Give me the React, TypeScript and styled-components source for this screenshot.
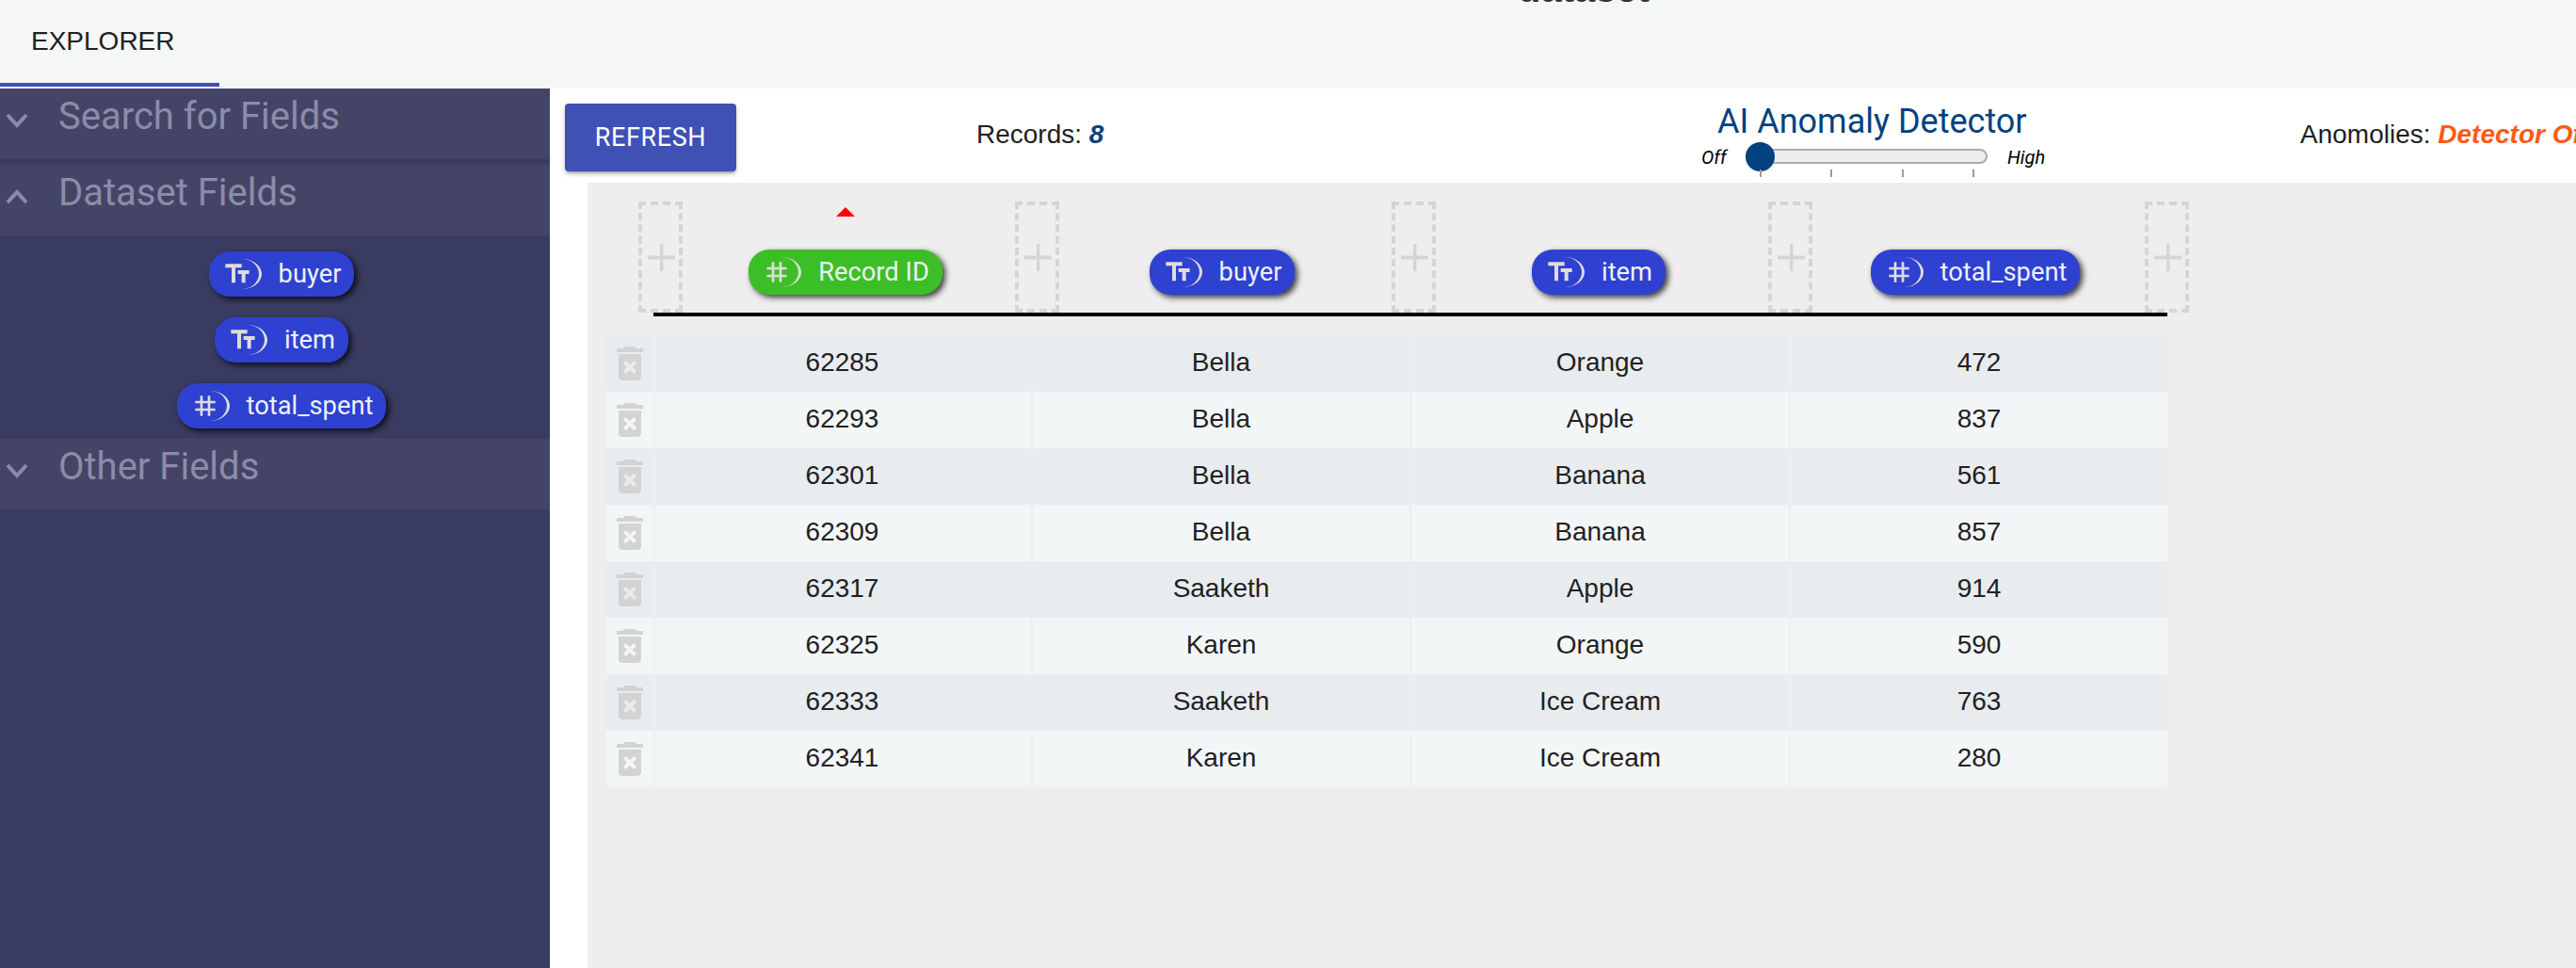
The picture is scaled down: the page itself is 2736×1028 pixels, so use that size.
import React from 'react';
import styled, { createGlobalStyle } from 'styled-components';

const Global = createGlobalStyle`
  html, body { margin: 0; padding: 0; background: #fff; overflow: hidden; }
  * { box-sizing: border-box; }
  #root { width: 2736px; height: 1028px; }
`;

const Page = styled.div`
  width: 2736px;
  height: 1028px;
  display: flex;
  flex-direction: column;
  overflow: hidden;
  position: relative;
  font-family: 'Liberation Sans', Arial, sans-serif;
  color: #212121;
`;

const Header = styled.header`
  height: 94px;
  flex: none;
  background: #f5f6f8;
  display: flex;
  align-items: flex-start;
  position: relative;
`;

const ClippedTitle = styled.div`
  position: absolute;
  left: 1612px;
  top: -34px;
  font: 700 40px 'Liberation Sans', sans-serif;
  color: #333;
`;

const Tab = styled.div`
  width: 233px;
  height: 92px;
  padding: 0 0 0 33px;
  display: flex;
  align-items: center;
  font: 400 28px 'Liberation Sans', sans-serif;
  color: #212121;
  border-bottom: 4px solid #3f51b5;
`;

const Body = styled.div`
  flex: 1;
  display: flex;
  min-height: 0;
`;

const Sidebar = styled.aside`
  width: 584px;
  flex: none;
  background: #393b61;
  display: flex;
  flex-direction: column;
`;

const Section = styled.div`
  display: flex;
  flex-direction: column;
`;

const SectionHead = styled.div<{ $gap?: boolean }>`
  height: 75px;
  background: #444566;
  display: flex;
  align-items: flex-start;
  margin-bottom: ${p => (p.$gap ? '6px' : '0')};
  color: #8b8ca9;
  font: 400 40px Roboto, sans-serif;
  padding-top: 7px;
  line-height: 46px;
`;

const ChevronBox = styled.span`
  width: 62px;
  flex: none;
  display: flex;
  padding: 13px 0 0 5px;
`;

const FieldList = styled.div`
  height: 216px;
  padding: 17px 0 0 14px;
  display: flex;
  flex-direction: column;
  align-items: center;
  gap: 22px;
`;

const Chip = styled.div<{ $green?: boolean }>`
  height: 48px;
  border-radius: 22px;
  padding: 0 14px;
  display: inline-flex;
  align-items: center;
  gap: 18px;
  flex: none;
  background: ${p => (p.$green ? '#3cbf26' : '#2f41d0')};
  color: #eef1f6;
  font: 400 27.3px Roboto, sans-serif;
  box-shadow: 3px 3px 6px rgba(0, 0, 0, 0.75);
`;

const ChipIcon = styled.span`
  width: 42px;
  height: 32px;
  flex: none;
  border-radius: 50%;
  border-right: 3px solid #ddd;
  display: block;
  line-height: 0;
  color: #ddd;
`;

const Main = styled.main`
  flex: 1;
  min-width: 0;
  display: flex;
  flex-direction: column;
`;

const TopBar = styled.div`
  height: 100px;
  flex: none;
  background: #fff;
  display: grid;
  grid-template-columns: 453px 136px 1270px 1fr;
  white-space: nowrap;
`;

const RefreshCell = styled.div`
  display: flex;
  align-items: flex-start;
  padding: 16px 0 0 16px;
`;

const RefreshButton = styled.button`
  width: 182px;
  height: 72px;
  background: #3f51b5;
  border: 0;
  border-radius: 4px;
  color: #fff;
  font: 400 27px Roboto, sans-serif;
  letter-spacing: 0.6px;
  box-shadow: 0 3px 3px -2px rgba(0, 0, 0, 0.3), 0 3px 5px rgba(0, 0, 0, 0.22);
`;

const Stat = styled.div`
  font: 400 28px 'Liberation Sans', sans-serif;
  color: #212121;
  padding-top: 34px;
  line-height: 30px;
`;

const StatValue = styled.b<{ $color: string }>`
  font-style: italic;
  color: ${p => p.$color};
`;

const DetectorCell = styled.div`
  display: flex;
  flex-direction: column;
  align-items: flex-start;
  padding-left: 634px;
`;

const DetectorTitle = styled.div`
  margin-left: 17px;
  font: 400 36px Roboto, sans-serif;
  color: #03417f;
  line-height: 42px;
  padding-top: 14px;
  height: 55px;
`;

const SliderRow = styled.div`
  display: flex;
  align-items: flex-start;
  font: italic 400 20px Roboto, sans-serif;
  color: #000;
  line-height: 24px;
  margin-top: 6px;
`;

const SliderLabel = styled.span`
  width: 47px;
  flex: none;
`;

const SliderBody = styled.div`
  position: relative;
  width: 257px;
  height: 16px;
  margin-top: 3px;
  margin-right: 21px;
  background: #eee;
  border: 2px solid #aaa;
  border-radius: 8px;
`;

const Thumb = styled.span`
  position: absolute;
  left: -2px;
  top: -9.5px;
  width: 31px;
  height: 31px;
  border-radius: 50%;
  background: #03417f;
`;

const Tick = styled.span`
  position: absolute;
  top: 20px;
  width: 1.5px;
  height: 8px;
  background: #a09a95;
`;

const Workspace = styled.div`
  flex: 1;
  background: #eee;
  margin-left: 40px;
  min-height: 0;
  padding: 20px 0 0 54px;
`;

const DropRow = styled.div`
  position: relative;
  display: flex;
  height: 118px;
  width: 1647px;
`;

const DropZone = styled.div`
  width: 47px;
  height: 118px;
  flex: none;
  border: 4px dashed #d5d5d5;
  display: flex;
  align-items: center;
  justify-content: center;
  padding-left: 2px;
`;

const ColumnHead = styled.div`
  width: 353px;
  flex: none;
  position: relative;
  display: flex;
  justify-content: center;
  padding-top: 51px;
  padding-right: 7px;
`;

const SortArrow = styled.span`
  position: absolute;
  left: 163px;
  top: 6px;
  width: 0;
  height: 0;
  border-left: 10px solid transparent;
  border-right: 10px solid transparent;
  border-bottom: 10px solid #f00;
`;

const Rule = styled.div`
  position: absolute;
  left: 16px;
  right: 23px;
  bottom: -4px;
  height: 4px;
  background: #000;
`;

const DataGrid = styled.div`
  margin: 24px 0 0 -34px;
  width: 1658px;
  display: flex;
  flex-direction: column;
`;

const DataRow = styled.div<{ $odd: boolean }>`
  height: 60px;
  display: grid;
  grid-template-columns: 50px 403px 402px 403px 400px;
  background: ${p => (p.$odd ? '#e8ecef' : '#f3f6f7')};
`;

const TrashCell = styled.div`
  border-right: 2px solid #eee;
  line-height: 0;
  padding: 6px 0 0 1px;
  margin-right: -2px;
  color: #d3d3d3;
  width: 52px;
`;

const DataCell = styled.div`
  border-right: 2px solid #eee;
  display: flex;
  align-items: center;
  justify-content: center;
  font: 400 28px 'Liberation Sans', sans-serif;
  color: #212121;
  padding-bottom: 2px;
  &:last-child { border-right: 0; }
`;

const TextIcon = () => (
  <svg width="32" height="32" viewBox="0 0 24 24" fill="currentColor">
    <path d="M2.5 4v3h5v12h3V7h5V4h-13zm19 5h-9v3h3v7h3v-7h3V9z" />
  </svg>
);

const HashIcon = () => (
  <svg width="32" height="32" viewBox="0 0 24 24" fill="currentColor">
    <path d="M20 10V8h-4V4h-2v4h-4V4H8v4H4v2h4v4H4v2h4v4h2v-4h4v4h2v-4h4v-2h-4v-4h4zm-6 4h-4v-4h4v4z" />
  </svg>
);

const TrashIcon = () => (
  <svg width="48" height="48" viewBox="0 0 24 24" fill="currentColor">
    <path d="M6 19c0 1.1.9 2 2 2h8c1.1 0 2-.9 2-2V7H6v12zm2.46-7.12 1.41-1.41L12 12.59l2.12-2.12 1.41 1.41L13.41 14l2.12 2.12-1.41 1.41L12 15.41l-2.12 2.12-1.41-1.41L10.59 14l-2.13-2.12zM15.5 4l-1-1h-5l-1 1H5v2h14V4z" />
  </svg>
);

const PlusIcon = () => (
  <svg width="29" height="29" viewBox="0 0 29 29" fill="#d5d5d5">
    <rect x="13" y="0" width="3.5" height="29" />
    <rect x="0" y="12.5" width="29" height="4" />
  </svg>
);

const Chevron = ({ up }: { up?: boolean }) => (
  <svg width="26" height="26" viewBox="0 0 26 26" fill="none" stroke="#8b8ca9" strokeWidth="4">
    <path d={up ? 'M3 20 L13 9 L23 20' : 'M3 8 L13 19 L23 8'} />
  </svg>
);

type Kind = 'text' | 'number';

const FieldChip = ({ kind, label, green }: { kind: Kind; label: string; green?: boolean }) => (
  <Chip $green={green}>
    <ChipIcon>{kind === 'text' ? <TextIcon /> : <HashIcon />}</ChipIcon>
    <span>{label}</span>
  </Chip>
);

const sidebarFields: { kind: Kind; label: string }[] = [
  { kind: 'text', label: 'buyer' },
  { kind: 'text', label: 'item' },
  { kind: 'number', label: 'total_spent' },
];

const columns: { kind: Kind; label: string; green?: boolean }[] = [
  { kind: 'number', label: 'Record ID', green: true },
  { kind: 'text', label: 'buyer' },
  { kind: 'text', label: 'item' },
  { kind: 'number', label: 'total_spent' },
];

const rows = [
  ['62285', 'Bella', 'Orange', '472'],
  ['62293', 'Bella', 'Apple', '837'],
  ['62301', 'Bella', 'Banana', '561'],
  ['62309', 'Bella', 'Banana', '857'],
  ['62317', 'Saaketh', 'Apple', '914'],
  ['62325', 'Karen', 'Orange', '590'],
  ['62333', 'Saaketh', 'Ice Cream', '763'],
  ['62341', 'Karen', 'Ice Cream', '280'],
];

const ticks = [13, 88, 164, 239];

export default function App() {
  return (
    <Page>
      <Global />
      <Header>
        <ClippedTitle>dataset</ClippedTitle>
        <Tab>EXPLORER</Tab>
      </Header>
      <Body>
        <Sidebar>
          <SectionHead $gap>
            <ChevronBox><Chevron /></ChevronBox>
            Search for Fields
          </SectionHead>
          <Section>
            <SectionHead>
              <ChevronBox><Chevron up /></ChevronBox>
              Dataset Fields
            </SectionHead>
            <FieldList>
              {sidebarFields.map(f => (
                <FieldChip key={f.label} kind={f.kind} label={f.label} />
              ))}
            </FieldList>
          </Section>
          <SectionHead>
            <ChevronBox><Chevron /></ChevronBox>
            Other Fields
          </SectionHead>
        </Sidebar>
        <Main>
          <TopBar>
            <RefreshCell>
              <RefreshButton>REFRESH</RefreshButton>
            </RefreshCell>
            <Stat>
              Records: <StatValue $color="#03417f">8</StatValue>
            </Stat>
            <DetectorCell>
              <DetectorTitle>AI Anomaly Detector</DetectorTitle>
              <SliderRow>
                <SliderLabel>Off</SliderLabel>
                <SliderBody>
                  <Thumb />
                  {ticks.map(t => (
                    <Tick key={t} style={{ left: t }} />
                  ))}
                </SliderBody>
                <span>High</span>
              </SliderRow>
            </DetectorCell>
            <Stat>
              Anomolies: <StatValue $color="#ff5a14">Detector Off</StatValue>
            </Stat>
          </TopBar>
          <Workspace>
            <DropRow>
              <DropZone><PlusIcon /></DropZone>
              {columns.map(c => (
                <React.Fragment key={c.label}>
                  <ColumnHead>
                    {c.green && <SortArrow />}
                    <FieldChip kind={c.kind} label={c.label} green={c.green} />
                  </ColumnHead>
                  <DropZone><PlusIcon /></DropZone>
                </React.Fragment>
              ))}
              <Rule />
            </DropRow>
            <DataGrid>
              {rows.map((r, i) => (
                <DataRow key={r[0]} $odd={i % 2 === 0}>
                  <TrashCell><TrashIcon /></TrashCell>
                  {r.map((v, j) => (
                    <DataCell key={j}>{v}</DataCell>
                  ))}
                </DataRow>
              ))}
            </DataGrid>
          </Workspace>
        </Main>
      </Body>
    </Page>
  );
}
